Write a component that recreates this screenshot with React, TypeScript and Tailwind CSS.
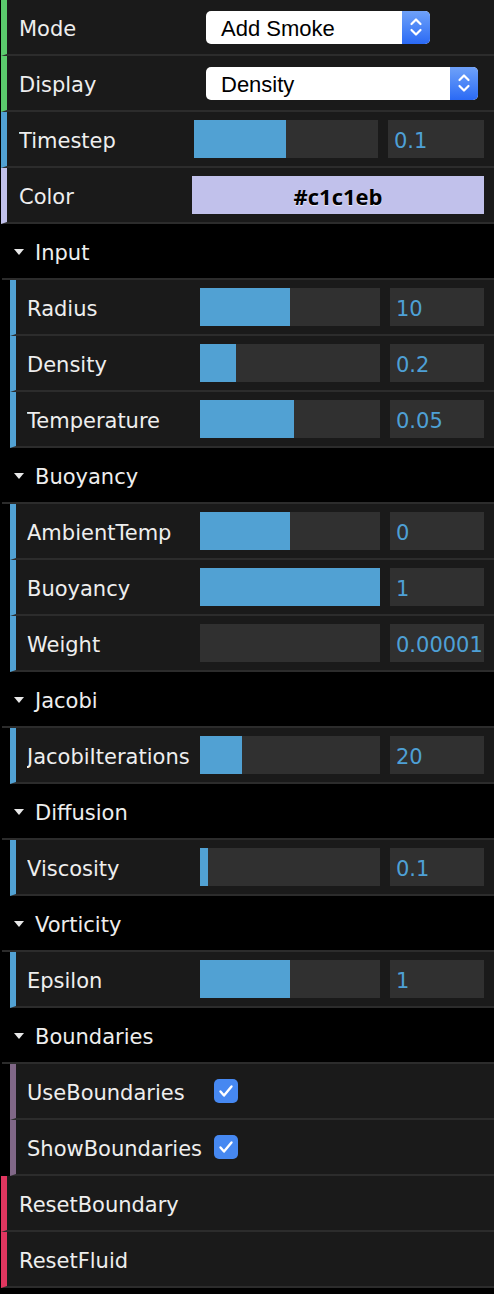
import React from "react";

const labelFont = "[font-family:'DejaVu_Sans',sans-serif]";

type SliderRow = { label: string; fill: number; value: string };

const Row = ({
  border,
  className = "",
  children,
}: {
  border: string;
  className?: string;
  children: React.ReactNode;
}) => (
  <div
    className={`flex h-[56px] items-center border-b-2 border-l-[6px] border-b-[#2c2c2c] bg-[#1a1a1a] ${border} ${className}`}
  >
    {children}
  </div>
);

const Label = ({ children, width }: { children: React.ReactNode; width: string }) => (
  <div className={`${width} shrink-0 truncate pt-[6px] text-[21px] text-[#eeeeee] ${labelFont}`}>{children}</div>
);

const Select = ({ value, width }: { value: string; width: string }) => (
  <div className={`flex h-[33px] ${width} overflow-hidden rounded-[5px] bg-white`}>
    <div className="flex flex-1 items-center pl-[15px] pt-[2px] text-[22px] text-black [font-family:'Liberation_Sans',sans-serif]">
      {value}
    </div>
    <div className="flex w-[28px] items-center justify-center bg-gradient-to-b from-[#6fa1f8] to-[#2a69f5]">
      <svg width="14" height="22" viewBox="0 0 14 22" fill="none" stroke="white" strokeWidth="2.2" strokeLinecap="round" strokeLinejoin="round">
        <path d="M2.5 8 L7 3.5 L11.5 8" />
        <path d="M2.5 14 L7 18.5 L11.5 14" />
      </svg>
    </div>
  </div>
);

const Slider = ({ fill, width }: { fill: number; width: string }) => (
  <div className={`h-[38px] ${width} shrink-0 bg-[#303030]`}>
    <div className="h-full bg-[#51a1d3]" style={{ width: fill }} />
  </div>
);

const NumberBox = ({ value, width }: { value: string; width: string }) => (
  <div
    className={`flex h-[38px] ${width} shrink-0 items-center bg-[#303030] pl-[6px] pt-[6px] text-[21px] text-[#4ea0d6] ${labelFont}`}
  >
    {value}
  </div>
);

const Folder = ({ title }: { title: string }) => (
  <div className="ml-[2px] flex h-[56px] items-center border-b-2 border-[#2c2c2c] bg-black">
    <svg width="10" height="6" viewBox="0 0 10 6" className="ml-[12px] mt-[2px]">
      <path d="M0 0 H10 L5 6 Z" fill="#e8e8e8" />
    </svg>
    <span className={`ml-[11px] pt-[6px] text-[21px] text-[#eeeeee] ${labelFont}`}>{title}</span>
  </div>
);

const NestedSlider = ({ label, fill, value }: SliderRow) => (
  <Row border="border-l-[#51a1d3]" className="ml-[10px]">
    <div className="pl-[11px]">
      <Label width="w-[173px]">{label}</Label>
    </div>
    <Slider fill={fill} width="w-[180px]" />
    <div className="w-[10px]" />
    <NumberBox value={value} width="w-[94px]" />
  </Row>
);

const Checkbox = () => (
  <div className="flex h-[24px] w-[24px] items-center justify-center rounded-[5px] bg-[#4688f1]">
    <svg width="16" height="14" viewBox="0 0 16 14" fill="none" stroke="white" strokeWidth="2.4" strokeLinecap="round" strokeLinejoin="round">
      <path d="M2.5 7.5 L6 11.5 L13.5 2.5" />
    </svg>
  </div>
);

const BoolRow = ({ label }: { label: string }) => (
  <Row border="border-l-[#806787]" className="ml-[10px]">
    <div className="pl-[11px]">
      <Label width="w-[187px]">{label}</Label>
    </div>
    <Checkbox />
  </Row>
);

const ButtonRow = ({ label }: { label: string }) => (
  <Row border="border-l-[#e0365f]" className="ml-[1px]">
    <div className="pl-[12px]">
      <Label width="w-[300px]">{label}</Label>
    </div>
  </Row>
);

const folders: { title: string; rows: SliderRow[] }[] = [
  {
    title: "Input",
    rows: [
      { label: "Radius", fill: 90, value: "10" },
      { label: "Density", fill: 36, value: "0.2" },
      { label: "Temperature", fill: 94, value: "0.05" },
    ],
  },
  {
    title: "Buoyancy",
    rows: [
      { label: "AmbientTemp", fill: 90, value: "0" },
      { label: "Buoyancy", fill: 180, value: "1" },
      { label: "Weight", fill: 0, value: "0.00001" },
    ],
  },
  { title: "Jacobi", rows: [{ label: "JacobiIterations", fill: 42, value: "20" }] },
  { title: "Diffusion", rows: [{ label: "Viscosity", fill: 8, value: "0.1" }] },
  { title: "Vorticity", rows: [{ label: "Epsilon", fill: 90, value: "1" }] },
];

export default function App() {
  return (
    <div className="min-h-[1294px] w-[494px] overflow-hidden bg-black">
      <Row border="border-l-[#5bca6d]" className="ml-[1px]">
        <div className="pl-[12px]">
          <Label width="w-[187px]">Mode</Label>
        </div>
        <Select value="Add Smoke" width="w-[224px]" />
      </Row>
      <Row border="border-l-[#5bca6d]" className="ml-[1px]">
        <div className="pl-[12px]">
          <Label width="w-[187px]">Display</Label>
        </div>
        <Select value="Density" width="w-[272px]" />
      </Row>
      <Row border="border-l-[#51a1d3]" className="ml-[1px]">
        <div className="pl-[12px]">
          <Label width="w-[175px]">Timestep</Label>
        </div>
        <Slider fill={92} width="w-[184px]" />
        <div className="w-[10px]" />
        <NumberBox value="0.1" width="w-[96px]" />
      </Row>
      <Row border="border-l-[#c1c1eb]" className="ml-[1px]">
        <div className="pl-[12px]">
          <Label width="w-[173px]">Color</Label>
        </div>
        <div className="flex h-[38px] w-[292px] items-center justify-center bg-[#c1c1eb] pt-[2px] text-[22px] font-bold text-black [text-shadow:0_1px_1px_rgba(255,255,255,0.7)] [font-family:'Open_Sans',sans-serif]">
          #c1c1eb
        </div>
      </Row>

      {folders.map((f) => (
        <div key={f.title}>
          <Folder title={f.title} />
          {f.rows.map((r) => (
            <NestedSlider key={r.label} {...r} />
          ))}
        </div>
      ))}

      <Folder title="Boundaries" />
      <BoolRow label="UseBoundaries" />
      <BoolRow label="ShowBoundaries" />
      <ButtonRow label="ResetBoundary" />
      <ButtonRow label="ResetFluid" />
    </div>
  );
}
